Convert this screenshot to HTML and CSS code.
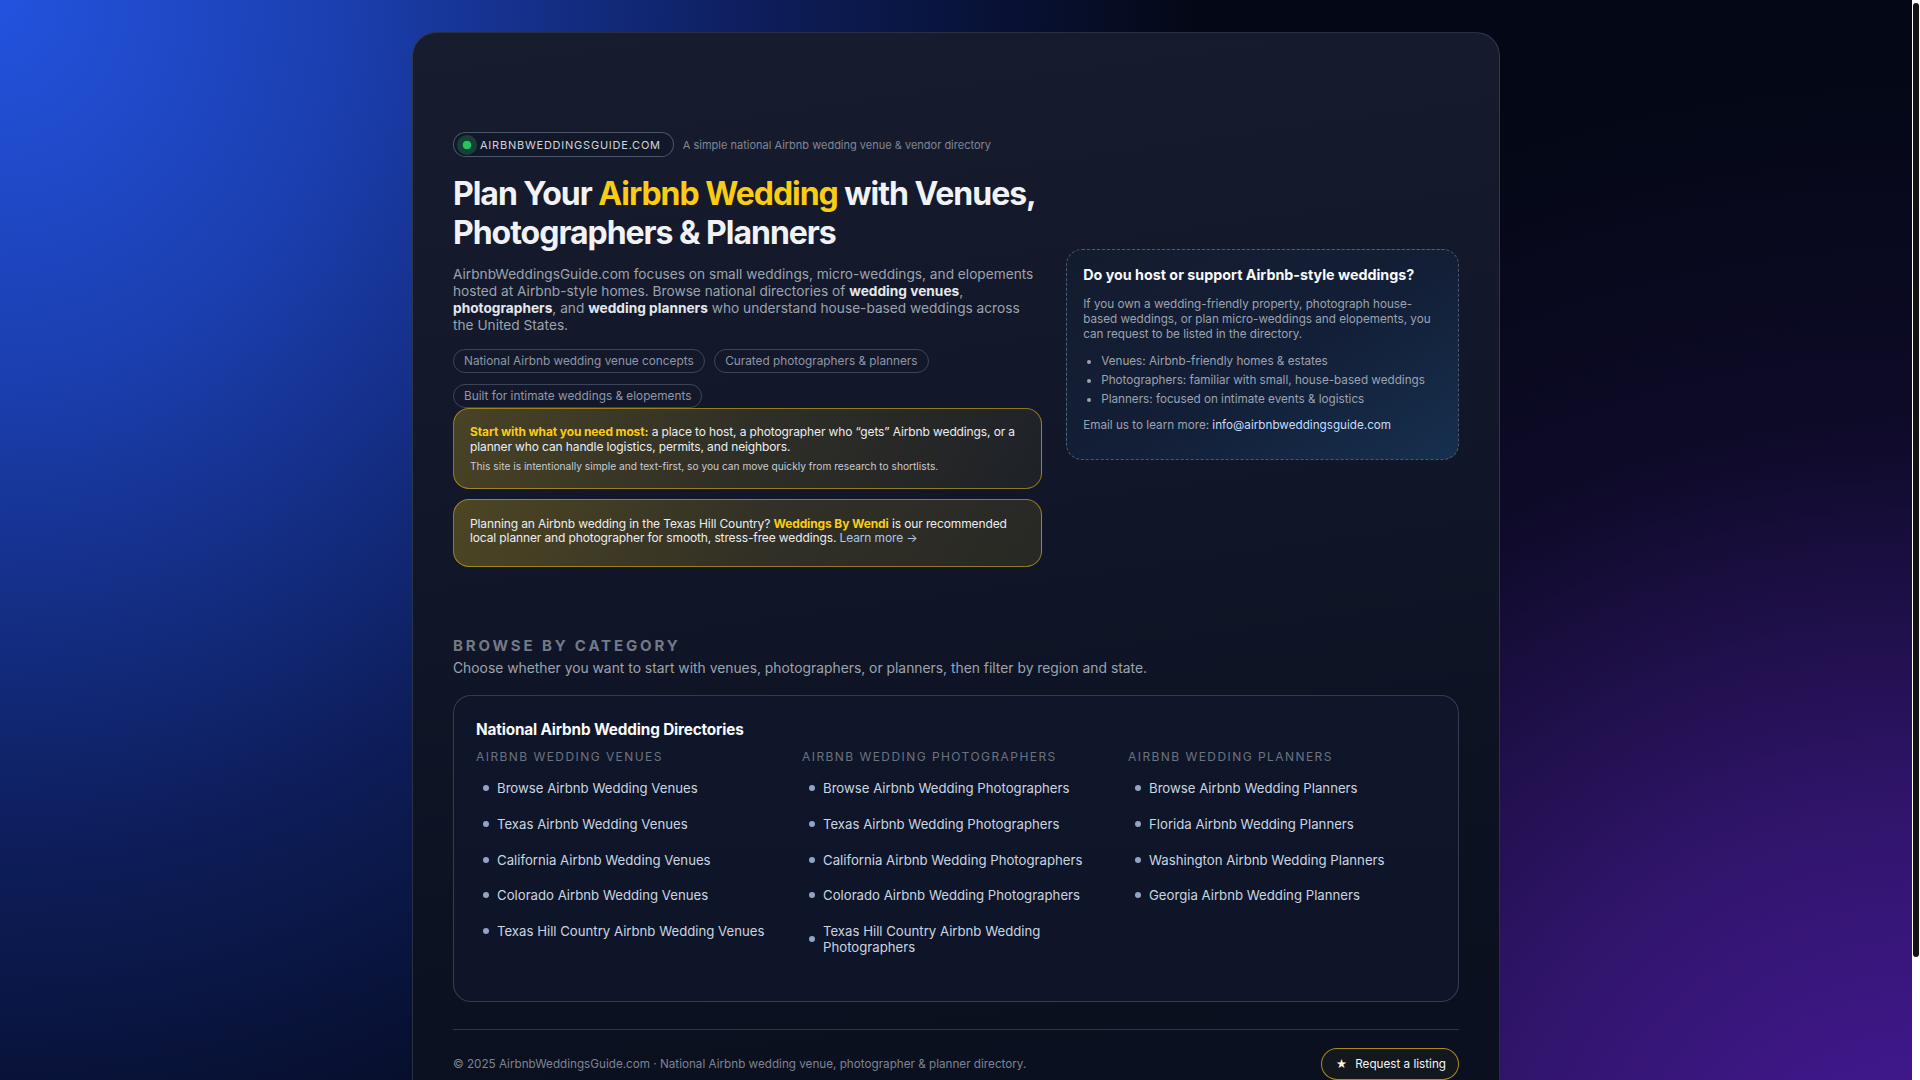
FILE: index.html
```html
<!DOCTYPE html>
<html lang="en">
<head>
<meta charset="utf-8">
<title>Airbnb Weddings Guide</title>
<link rel="stylesheet" href="styles.css">
</head>
<body>
<div class="page">
  <main class="shell">
    <section class="hero">
      <div class="hero-main">
        <div class="brand-row">
          <span class="badge"><span class="dot"></span>AIRBNBWEDDINGSGUIDE.COM</span>
          <span class="tagline">A simple national Airbnb wedding venue &amp; vendor directory</span>
        </div>
        <h1>Plan Your <span class="accent">Airbnb Wedding</span> with Venues, Photographers &amp; Planners</h1>
        <p class="lead">AirbnbWeddingsGuide.com focuses on small weddings, micro-weddings, and elopements hosted at Airbnb-style homes. Browse national directories of <strong>wedding venues</strong>, <strong>photographers</strong>, and <strong>wedding planners</strong> who understand house-based weddings across the United States.</p>
        <div class="pills">
          <span class="pill">National Airbnb wedding venue concepts</span>
          <span class="pill">Curated photographers &amp; planners</span>
          <span class="pill">Built for intimate weddings &amp; elopements</span>
        </div>
        <div class="callout">
          <p class="callout-main"><strong>Start with what you need most:</strong> a place to host, a photographer who “gets” Airbnb weddings, or a planner who can handle logistics, permits, and neighbors.</p>
          <p class="callout-note">This site is intentionally simple and text-first, so you can move quickly from research to shortlists.</p>
        </div>
        <div class="callout callout-wendi">
          <p class="callout-main">Planning an Airbnb wedding in the Texas Hill Country? <strong>Weddings By Wendi</strong> is our recommended local planner and photographer for smooth, stress-free weddings. <a class="learn" href="#">Learn more →</a></p>
        </div>
      </div>
      <aside class="host-card">
        <h3>Do you host or support Airbnb-style weddings?</h3>
        <p>If you own a wedding-friendly property, photograph house-based weddings, or plan micro-weddings and elopements, you can request to be listed in the directory.</p>
        <ul>
          <li>Venues: Airbnb-friendly homes &amp; estates</li>
          <li>Photographers: familiar with small, house-based weddings</li>
          <li>Planners: focused on intimate events &amp; logistics</li>
        </ul>
        <p>Email us to learn more: <a class="mail" href="#">info@airbnbweddingsguide.com</a></p>
      </aside>
    </section>

    <section class="browse">
      <h2>Browse by category</h2>
      <p class="browse-sub">Choose whether you want to start with venues, photographers, or planners, then filter by region and state.</p>
      <div class="dir-card">
        <h3>National Airbnb Wedding Directories</h3>
        <div class="dir-grid">
          <div class="dir-col">
            <h4>Airbnb Wedding Venues</h4>
            <ul>
              <li><a href="#"><span class="b"></span><span>Browse Airbnb Wedding Venues</span></a></li>
              <li><a href="#"><span class="b"></span><span>Texas Airbnb Wedding Venues</span></a></li>
              <li><a href="#"><span class="b"></span><span>California Airbnb Wedding Venues</span></a></li>
              <li><a href="#"><span class="b"></span><span>Colorado Airbnb Wedding Venues</span></a></li>
              <li><a href="#"><span class="b"></span><span>Texas Hill Country Airbnb Wedding Venues</span></a></li>
            </ul>
          </div>
          <div class="dir-col">
            <h4>Airbnb Wedding Photographers</h4>
            <ul>
              <li><a href="#"><span class="b"></span><span>Browse Airbnb Wedding Photographers</span></a></li>
              <li><a href="#"><span class="b"></span><span>Texas Airbnb Wedding Photographers</span></a></li>
              <li><a href="#"><span class="b"></span><span>California Airbnb Wedding Photographers</span></a></li>
              <li><a href="#"><span class="b"></span><span>Colorado Airbnb Wedding Photographers</span></a></li>
              <li><a href="#"><span class="b"></span><span>Texas Hill Country Airbnb Wedding Photographers</span></a></li>
            </ul>
          </div>
          <div class="dir-col">
            <h4>Airbnb Wedding Planners</h4>
            <ul>
              <li><a href="#"><span class="b"></span><span>Browse Airbnb Wedding Planners</span></a></li>
              <li><a href="#"><span class="b"></span><span>Florida Airbnb Wedding Planners</span></a></li>
              <li><a href="#"><span class="b"></span><span>Washington Airbnb Wedding Planners</span></a></li>
              <li><a href="#"><span class="b"></span><span>Georgia Airbnb Wedding Planners</span></a></li>
            </ul>
          </div>
        </div>
      </div>
    </section>

    <footer class="foot">
      <span class="copy">© 2025 AirbnbWeddingsGuide.com · National Airbnb wedding venue, photographer &amp; planner directory.</span>
      <a class="req" href="#"><span class="star">★</span>Request a listing</a>
    </footer>
  </main>
</div>
<div class="scrollbar" aria-hidden="true"><div class="scrollbar-thumb"></div></div>
</body>
</html>
```

FILE: styles.css
```css
body {
  margin: 0;
  font-family: Inter, "Noto Sans", "DejaVu Sans", sans-serif;
  color: #e5e7eb;
  background:
    radial-gradient(80% 140% at 0% 0%, #2353de 0%, #1b3fb0 22%, rgba(16,36,112,0.75) 50%, rgba(10,20,60,0) 78%),
    radial-gradient(75% 110% at 100% 100%, #47199a 0%, rgba(60,24,130,0.8) 30%, rgba(30,14,70,0.35) 60%, rgba(20,10,50,0) 85%),
    #040816;
}

a { text-decoration: none; color: inherit; }

.page {
  padding: 32px 8px 32px 0;
}

/* scrollbar strip on the right edge, as in the capture */
.scrollbar {
  position: fixed;
  top: 0;
  right: 0;
  width: 8px;
  height: 100vh;
  background: #ffffff;
}
.scrollbar-thumb {
  margin: 3px 1px 0;
  height: 954px;
  border-radius: 3px;
  background: #141414;
}

.shell {
  width: 1088px;
  box-sizing: border-box;
  margin: 0 auto;
  padding: 99px 40px 106px;
  border: 1px solid rgba(148,163,184,0.22);
  border-radius: 24px;
  background: linear-gradient(172deg, #171d2e 0%, #111729 40%, #0b1120 75%, #0a0f1e 100%);
}

/* hero */
.hero {
  display: grid;
  grid-template-columns: 3fr 2fr;
  gap: 24px;
  align-items: center;
}

.brand-row { display: flex; align-items: center; gap: 9px; }

.badge {
  display: inline-flex;
  align-items: center;
  gap: 3px;
  padding: 1.5px 12px 1.5px 3px;
  border: 1px solid rgba(148,163,184,0.45);
  border-radius: 999px;
  background: rgba(15,23,42,0.7);
  color: #d1d5db;
  font-size: 11px;
  letter-spacing: 0.07em;
}

.dot {
  width: 20px;
  height: 20px;
  border-radius: 50%;
  background: radial-gradient(circle, #22c55e 0 4px, rgba(34,197,94,0.24) 4.6px);
}

.tagline { font-size: 11px; color: #7f8797; }

h1 {
  margin: 17px 0 14px;
  font-size: 32px;
  font-weight: 700;
  letter-spacing: -0.032em;
  color: #f1f2f5;
}
.accent { color: #facc15; }

.lead { margin: 0 0 15px; font-size: 13.7px; line-height: 17px; color: #9ca3af; }
.lead strong { color: #e5e7eb; font-weight: 700; }

.pills { display: flex; flex-wrap: wrap; gap: 10.5px 9.5px; }
.pill {
  padding: 4px 10px;
  border: 1px solid rgba(148,163,184,0.32);
  border-radius: 999px;
  font-size: 11.8px;
  color: #8f97a8;
}

.callout {
  margin-bottom: 10.5px;
  padding: 16.5px 16px 15.8px;
  border: 1px solid rgba(250,204,21,0.5);
  border-radius: 16px;
  background: linear-gradient(110deg, rgba(250,204,21,0.24) 0%, rgba(250,204,21,0.13) 50%, rgba(250,204,21,0.06) 100%);
}
.callout p { margin: 0; }
.callout-main { font-size: 12px; letter-spacing: -0.01em; line-height: 14.8px; color: #eceef1; }
.callout-main strong { color: #facc15; font-weight: 700; }
.callout .callout-note { margin-top: 5.2px; font-size: 10.2px; color: #c9ccd2; }
.callout-wendi { padding: 16.5px 16px 19.5px; background: linear-gradient(110deg, rgba(250,204,21,0.26) 0%, rgba(250,204,21,0.15) 50%, rgba(250,204,21,0.1) 100%); }
.learn { color: #aac6ef; }

.host-card {
  padding: 16px;
  border: 1px dashed rgba(148,163,184,0.45);
  border-radius: 16px;
  background: linear-gradient(150deg, #141b2e 0%, #131f37 55%, #16304f 100%);
}
.host-card h3 { margin: 0 0 13.5px; font-size: 14.3px; font-weight: 700; color: #f9fafb; }
.host-card p { margin: 0 0 10px; font-size: 11.7px; line-height: 15px; color: #9ca3af; }
.host-card ul { margin: 0 0 9.5px; padding-left: 18px; font-size: 11.7px; color: #9ca3af; }
.host-card li { line-height: 19px; }
.mail { color: #c7dcfc; }

/* browse */
.browse { margin-top: 59px; }
.browse h2 {
  margin: 0 0 5px;
  font-size: 15px;
  font-weight: 700;
  letter-spacing: 0.19em;
  text-transform: uppercase;
  color: #737a87;
}
.browse-sub { margin: 0 0 19px; font-size: 13.85px; color: #9ca3af; }

.dir-card {
  padding: 23.5px 22px 36px;
  border: 1px solid rgba(148,163,184,0.28);
  border-radius: 18px;
  background: linear-gradient(180deg, #0f1629 0%, #0e1528 100%);
}
.dir-card h3 { margin: 0 0 10.5px; font-size: 15.3px; font-weight: 700; color: #f8fafc; letter-spacing: -0.01em; }
.dir-grid { display: grid; grid-template-columns: repeat(3, 1fr); gap: 18px; }
.dir-col h4 {
  margin: 0 0 6px;
  font-size: 12px;
  font-weight: 400;
  letter-spacing: 0.12em;
  text-transform: uppercase;
  color: #6b7280;
}
.dir-col ul { list-style: none; margin: 0; padding: 0; }
.dir-col a {
  display: flex;
  align-items: center;
  gap: 8px;
  padding: 9.8px 7px;
  font-size: 13.2px;
  line-height: 16.2px;
  color: #cbd5e1;
}
.b { flex: none; width: 6px; height: 6px; border-radius: 50%; background: #93a4c3; }

/* footer */
.foot {
  margin-top: 27px;
  padding-top: 18px;
  border-top: 1px solid rgba(148,163,184,0.25);
  display: flex;
  justify-content: space-between;
  align-items: center;
}
.copy { font-size: 11.7px; color: #7c8494; }
.req {
  display: inline-flex;
  align-items: center;
  gap: 8px;
  padding: 8px 12px 8px 14px;
  border: 1px solid rgba(250,204,21,0.65);
  border-radius: 999px;
  background: rgba(250,204,21,0.04);
  font-size: 11.7px;
  color: #f3f4f6;
}
.star { font-size: 11px; color: #fdf6d8; }
```
